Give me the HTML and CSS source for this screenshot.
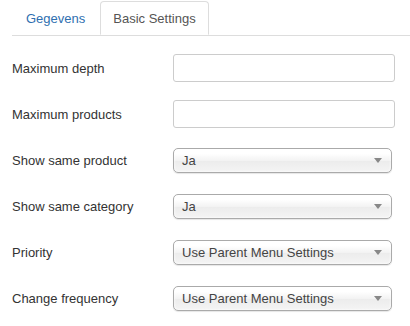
FILE: index.html
```html
<!DOCTYPE html>
<html>
<head>
<meta charset="utf-8">
<link rel="stylesheet" href="styles.css">
</head>
<body>
<div class="page">
  <ul class="tabs">
    <li class="tab"><a class="tab-link">Gegevens</a></li>
    <li class="tab active"><a class="tab-link">Basic Settings</a></li>
  </ul>
  <div class="form">
    <div class="row"><label class="label">Maximum depth</label><input class="text-input" type="text"></div>
    <div class="row"><label class="label">Maximum products</label><input class="text-input" type="text"></div>
    <div class="row"><label class="label">Show same product</label><div class="select"><span class="select-value">Ja</span><span class="arrow"></span></div></div>
    <div class="row"><label class="label">Show same category</label><div class="select"><span class="select-value">Ja</span><span class="arrow"></span></div></div>
    <div class="row"><label class="label">Priority</label><div class="select"><span class="select-value">Use Parent Menu Settings</span><span class="arrow"></span></div></div>
    <div class="row"><label class="label">Change frequency</label><div class="select"><span class="select-value">Use Parent Menu Settings</span><span class="arrow"></span></div></div>
  </div>
</div>
</body>
</html>
```

FILE: styles.css
```css
html, body {
  margin: 0;
  padding: 0;
  background: #fff;
}
body {
  font-family: "Liberation Sans", Arial, sans-serif;
  font-size: 13px;
  color: #333;
}
.page {
  padding-left: 12px;
}
.tabs {
  list-style: none;
  margin: 0;
  padding: 1px 0 0 0;
  display: flex;
  height: 34px;
  border-bottom: 1px solid #ddd;
}
.tab {
  margin-bottom: -1px;
}
.tab-link {
  display: block;
  height: 34px;
  box-sizing: border-box;
  padding: 0 14px;
  line-height: 34px;
  color: #2f6fb0;
  border: 1px solid transparent;
  border-radius: 4px 4px 0 0;
}
.tab:first-child .tab-link {
  padding-left: 13px;
  padding-right: 14px;
}
.tab.active .tab-link {
  color: #555;
  background: #fff;
  border-color: #ddd;
  border-bottom-color: #fff;
  padding: 0 12px;
}
.form {
  padding-top: 9px;
}
.row {
  display: flex;
  align-items: center;
  height: 46px;
}
.label {
  width: 161px;
  flex: none;
  color: #333;
  padding-top: 1px;
}
.text-input {
  width: 222px;
  height: 28px;
  box-sizing: border-box;
  border: 1px solid #ccc;
  border-radius: 3px;
  margin: 0;
  padding: 4px 6px;
  font: inherit;
  background: #fff;
}
.select {
  width: 219px;
  height: 25px;
  box-sizing: border-box;
  border: 1px solid #aaa;
  border-radius: 5px;
  background: linear-gradient(to bottom, #fff 20%, #f3f3f3 50%, #ececec 52%, #f4f4f4 100%);
  box-shadow: 0 0 3px #fff inset, 0 1px 1px rgba(0,0,0,0.1);
  display: flex;
  align-items: center;
  justify-content: space-between;
  padding: 0 9px 0 8px;
  color: #444;
}
.select-value {
  line-height: 23px;
}
.arrow {
  width: 0;
  height: 0;
  border-left: 4px solid transparent;
  border-right: 4px solid transparent;
  border-top: 5px solid #888;
}
```
